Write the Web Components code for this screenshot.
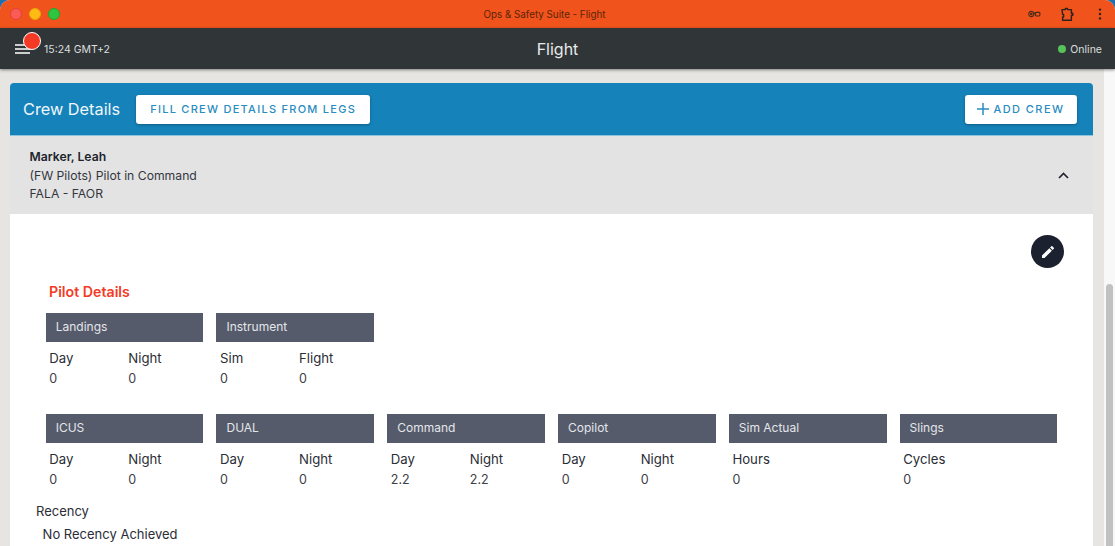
<!DOCTYPE html>
<html>
<head>
<meta charset="utf-8">
<title>Flight</title>
<style>
  html, body { margin: 0; padding: 0; height: 100%; overflow: hidden; background: #1c6fb0; }
  body { font-family: Inter, "Liberation Sans", sans-serif; }
</style>
</head>
<body>
<app-window>
  <title-bar slot="top" title-text="Ops &amp; Safety Suite - Flight"></title-bar>
  <nav-bar slot="top" time="15:24 GMT+2" heading="Flight" status="Online"></nav-bar>
  <crew-panel heading="Crew Details">
    <crew-row name="Marker, Leah" role="(FW Pilots) Pilot in Command" route="FALA - FAOR"></crew-row>
    <pilot-details>
      <stat-group slot="first" heading="Landings" columns="Day:0,Night:0"></stat-group>
      <stat-group slot="first" heading="Instrument" columns="Sim:0,Flight:0"></stat-group>
      <stat-group slot="second" heading="ICUS" columns="Day:0,Night:0"></stat-group>
      <stat-group slot="second" heading="DUAL" columns="Day:0,Night:0"></stat-group>
      <stat-group slot="second" heading="Command" columns="Day:2.2,Night:2.2"></stat-group>
      <stat-group slot="second" heading="Copilot" columns="Day:0,Night:0"></stat-group>
      <stat-group slot="second" heading="Sim Actual" columns="Hours:0"></stat-group>
      <stat-group slot="second" heading="Slings" columns="Cycles:0"></stat-group>
    </pilot-details>
  </crew-panel>
</app-window>

<script>
class AppWindow extends HTMLElement {
  constructor () {
    super()
    this.shadow = this.attachShadow({ mode: 'open' })
    this.shadow.innerHTML = `
      <style>
        :host { display: flex; flex-direction: column; width: 1115px; height: 546px; overflow: hidden; background: #e6e5e1; border-radius: 10px 10px 0 0; }
        .main { flex: 1; min-height: 0; display: flex; }
        .content { flex: 1; min-width: 0; overflow: hidden; padding: 14px 11px 0 10px; }
        .track { width: 11px; box-sizing: border-box; background: #f8f8f8; padding: 215px 2px 0 2px; }
        .thumb { height: 300px; background: #c1c1c1; border-radius: 4px; }
      </style>
      <slot name="top"></slot>
      <div class="main">
        <div class="content"><slot></slot></div>
        <div class="track"><div class="thumb"></div></div>
      </div>
    `
  }
}

class TitleBar extends HTMLElement {
  constructor () {
    super()
    this.shadow = this.attachShadow({ mode: 'open' })
    this.shadow.innerHTML = `
      <style>
        :host { display: grid; grid-template-columns: 1fr auto 1fr; align-items: center; height: 28px; background: #f0531c; color: #5c2308; font-size: 9.8px; }
        .lights { display: flex; gap: 7px; padding-left: 10px; }
        .lights i { width: 12px; height: 12px; border-radius: 50%; box-sizing: border-box; }
        .red { background: #fb5b57; border: 1px solid #e5413d; }
        .yellow { background: #fdbb13; border: 1px solid #e6a50c; }
        .green { background: #2ec53f; border: 1px solid #22a831; }
        .label { margin-left: -26px; }
        .tools { display: flex; justify-content: flex-end; align-items: center; }
        svg { display: block; }
      </style>
      <div class="lights"><i class="red"></i><i class="yellow"></i><i class="green"></i></div>
      <div class="label"></div>
      <div class="tools">
        <svg width="13" height="8" viewBox="0 0 14 8" style="margin-right:19px" fill="none" stroke="#4a2a18" stroke-width="1.2">
          <circle cx="3.6" cy="4" r="2.8"/><circle cx="3.6" cy="4" r=".8" fill="#4a2a18"/><rect x="8" y="2.3" width="4.8" height="3.8" rx="1"/><path d="M6.4 3h2"/>
        </svg>
        <svg width="15" height="15" viewBox="0 0 15 15" style="margin-right:23px" fill="none" stroke="#2b2320" stroke-width="1.4" stroke-linejoin="round">
          <path d="M2 2.6h3.4V1.4h2v1.2h4v3.6h1.4v2h-1.4v5H2.6v-3.2h1v-2.6h-1z"/>
        </svg>
        <svg width="4" height="12" viewBox="0 0 4 12" style="margin-right:13px" fill="#2b2320">
          <circle cx="2" cy="1.6" r="1.2"/><circle cx="2" cy="6" r="1.2"/><circle cx="2" cy="10.4" r="1.2"/>
        </svg>
      </div>
    `
    this.shadow.querySelector('.label').textContent = this.getAttribute('title-text')
  }
}

class NavBar extends HTMLElement {
  constructor () {
    super()
    this.shadow = this.attachShadow({ mode: 'open' })
    this.shadow.innerHTML = `
      <style>
        :host { display: grid; grid-template-columns: 1fr auto 1fr; align-items: center; height: 41px; background: #303638; color: #dcdedf; box-shadow: 0 1px 3px rgba(0,0,0,.45); position: relative; z-index: 1; }
        .left { display: flex; align-items: center; padding-left: 15px; }
        .menu { position: relative; width: 29px; height: 14px; margin-top: 2px; }
        .menu svg { display: block; }
        .dot { position: absolute; left: 8px; top: -11px; width: 16px; height: 16px; border-radius: 50%; background: #f43a24; border: 1.5px solid #fff; }
        .time { font-size: 10.5px; margin-top: 2px; }
        .title { font-size: 16px; color: #e8e9ea; }
        .right { display: flex; justify-content: flex-end; align-items: center; gap: 4px; padding-right: 13px; font-size: 10.5px; margin-top: 1px; }
        .status { width: 8px; height: 8px; border-radius: 50%; background: #56c25a; }
      </style>
      <div class="left">
        <div class="menu">
          <svg width="16" height="12" viewBox="0 0 16 12" stroke="#fff" stroke-width="1.3"><path d="M0 2h16M0 6h16M0 10h15"/></svg>
          <div class="dot"></div>
        </div>
        <div class="time"></div>
      </div>
      <div class="title"></div>
      <div class="right"><span class="status"></span><span class="online"></span></div>
    `
    this.shadow.querySelector('.time').textContent = this.getAttribute('time')
    this.shadow.querySelector('.title').textContent = this.getAttribute('heading')
    this.shadow.querySelector('.online').textContent = this.getAttribute('status')
  }
}

class CrewPanel extends HTMLElement {
  constructor () {
    super()
    this.shadow = this.attachShadow({ mode: 'open' })
    this.shadow.innerHTML = `
      <style>
        :host { display: block; background: #fff; border-radius: 4px 4px 0 0; overflow: hidden; }
        .head { display: flex; align-items: center; height: 52px; padding: 0 16px 0 13px; background: #1682ba; border-bottom: 1px solid #8cc3df; }
        h2 { margin: 0 16px 0 0; font-size: 16.3px; font-weight: 400; color: #eef6fa; }
        button { height: 29px; padding: 0 14px; background: #fff; color: #2a8cc0; border: none; border-radius: 3px; font: 500 11px Inter, "Liberation Sans", sans-serif; letter-spacing: 1.27px; box-shadow: 0 1px 3px rgba(0,0,0,.3); display: flex; align-items: center; gap: 4px; }
        .add { margin-left: auto; padding: 0 12.5px; letter-spacing: 1.45px; }
      </style>
      <div class="head">
        <h2></h2>
        <button>FILL CREW DETAILS FROM LEGS</button>
        <button class="add">
          <svg width="12" height="12" viewBox="0 0 12 12" stroke="#2a8cc0" stroke-width="1.5"><path d="M6 0v12M0 6h12"/></svg>
          ADD CREW
        </button>
      </div>
      <slot></slot>
    `
    this.shadow.querySelector('h2').textContent = this.getAttribute('heading')
  }
}

class CrewRow extends HTMLElement {
  constructor () {
    super()
    this.shadow = this.attachShadow({ mode: 'open' })
    this.shadow.innerHTML = `
      <style>
        :host { display: flex; align-items: center; justify-content: space-between; height: 78px; padding: 0 24px 0 19.5px; background: #e3e3e3; color: #33363d; font-size: 12.2px; }
        .lines { line-height: 18.7px; margin-top: 2px; }
        b { font-weight: 600; color: #20232b; display: block; }
        span { display: block; }
        svg { display: block; margin-top: 1px; }
      </style>
      <div class="lines"><b class="name"></b><span class="role"></span><span class="route"></span></div>
      <svg width="11" height="7" viewBox="0 0 11 7" fill="none" stroke="#20232b" stroke-width="1.7"><path d="M1 6l4.5-4.5L10 6"/></svg>
    `
    this.shadow.querySelector('.name').textContent = this.getAttribute('name')
    this.shadow.querySelector('.role').textContent = this.getAttribute('role')
    this.shadow.querySelector('.route').textContent = this.getAttribute('route')
  }
}

class PilotDetails extends HTMLElement {
  constructor () {
    super()
    this.shadow = this.attachShadow({ mode: 'open' })
    this.shadow.innerHTML = `
      <style>
        :host { display: block; height: 340px; padding: 21px 29px 0 26px; color: #2a2d35; }
        .tools { display: flex; justify-content: flex-end; }
        .edit { width: 33px; height: 33px; border-radius: 50%; background: #1c2130; display: flex; align-items: center; justify-content: center; }
        h3 { margin: 14px 0 0 13px; font-size: 14.2px; line-height: 20px; font-weight: 600; color: #f43a24; }
        .grid { display: grid; grid-template-columns: repeat(6, 157.7px); column-gap: 13.1px; margin: 11.3px 0 0 9.7px; }
        .second { margin-top: 26px; }
        .recency { margin: 13.7px 0 0 0; font-size: 13px; line-height: 18px; }
        .none { margin: 5px 0 0 6.6px; font-size: 13px; line-height: 18px; }
      </style>
      <div class="tools">
        <div class="edit">
          <svg width="16" height="16" viewBox="0 0 24 24" fill="#fff"><path d="M3 17.25V21h3.75L17.81 9.94l-3.75-3.75L3 17.25zM20.71 7.04a1 1 0 0 0 0-1.41l-2.34-2.34a1 1 0 0 0-1.41 0l-1.83 1.83 3.75 3.75 1.83-1.83z"/></svg>
        </div>
      </div>
      <h3>Pilot Details</h3>
      <div class="grid"><slot name="first"></slot></div>
      <div class="grid second"><slot name="second"></slot></div>
      <div class="recency">Recency</div>
      <div class="none">No Recency Achieved</div>
    `
  }
}

class StatGroup extends HTMLElement {
  constructor () {
    super()
    this.shadow = this.attachShadow({ mode: 'open' })
    this.shadow.innerHTML = `
      <style>
        :host { display: block; font-size: 13.2px; }
        .bar { height: 28.7px; line-height: 28.7px; padding-left: 10px; background: #555b6b; color: #e4e6ea; font-size: 12px; }
        .cols { display: flex; padding: 6px 0 0 3.6px; }
        .col { flex: 0 0 79px; }
        .label { line-height: 21px; color: #2a2d35; }
        .value { line-height: 19px; color: #3d4047; font-size: 12.5px; }
      </style>
      <div class="bar"></div>
      <div class="cols"></div>
    `
    this.shadow.querySelector('.bar').textContent = this.getAttribute('heading')
    const cols = this.shadow.querySelector('.cols')
    this.getAttribute('columns').split(',').forEach(item => {
      const [label, value] = item.split(':')
      const col = document.createElement('div')
      col.className = 'col'
      col.innerHTML = `<div class="label">${label}</div><div class="value">${value}</div>`
      cols.appendChild(col)
    })
  }
}

customElements.define('app-window', AppWindow)
customElements.define('title-bar', TitleBar)
customElements.define('nav-bar', NavBar)
customElements.define('crew-panel', CrewPanel)
customElements.define('crew-row', CrewRow)
customElements.define('pilot-details', PilotDetails)
customElements.define('stat-group', StatGroup)
</script>
</body>
</html>
